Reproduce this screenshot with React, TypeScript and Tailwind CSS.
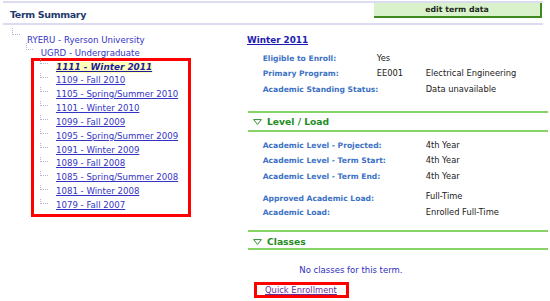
import React from "react";

const TERMS = [
  "1109 - Fall 2010",
  "1105 - Spring/Summer 2010",
  "1101 - Winter 2010",
  "1099 - Fall 2009",
  "1095 - Spring/Summer 2009",
  "1091 - Winter 2009",
  "1089 - Fall 2008",
  "1085 - Spring/Summer 2008",
  "1081 - Winter 2008",
  "1079 - Fall 2007",
];

const label = "font-bold text-[7.6px] text-[#3d72c4] whitespace-nowrap";
const value = "text-[8.3px] text-[#1a1a1a] whitespace-nowrap";

function GreenLine() {
  return <div className="ml-[1px] h-[2px] w-[300px] bg-[#86d466]" />;
}

function Tri() {
  return (
    <svg width="9" height="6" viewBox="0 0 9 6" className="ml-[5.7px] shrink-0">
      <polygon points="0.6,0.6 8.4,0.6 4.5,5.4" fill="#ffffff" stroke="#2e8b2e" strokeWidth="1" />
    </svg>
  );
}

function Connector({ className }: { className: string }) {
  return <div className={"shrink-0 border-l border-b border-dotted border-[#b3b7d3] " + className} />;
}

export default function App() {
  return (
    <div className="relative w-[550px] h-[301px] overflow-hidden bg-white font-['DejaVu_Sans',sans-serif]">
      {/* header */}
      <div className="mt-[1px] mx-[3px] w-[540px] border-t-2 border-b-2 border-[#dcdcf0] h-[24px] flex items-start">
        <div className="pl-[7px] pt-[7px] text-[9.5px] leading-[10px] font-bold tracking-[-0.35px] text-[#1f3a6e]">
          Term Summary
        </div>
        <div className="ml-auto mr-[1px] w-[168px] h-[15px] bg-[#d9f2cc] border-r-2 border-b-2 border-[#3f8a1f] flex items-center justify-center text-[7.8px] font-bold text-[#1d2a1d]">
          edit term data
        </div>
      </div>

      <div className="flex">
        {/* left tree */}
        <div className="w-[247px] shrink-0 flex flex-col text-[8.6px] text-[#3434c4]">
          <div className="mt-[8.5px] h-[13px] leading-[13px] flex items-start">
            <Connector className="ml-[12px] mt-[-5.5px] h-[7px] w-[8px]" />
            <span className="ml-[7px] whitespace-nowrap">RYERU - Ryerson University</span>
          </div>
          <div className="h-[13px] leading-[13px] flex items-start">
            <Connector className="ml-[26px] mt-[-3.5px] h-[7px] w-[7px]" />
            <span className="ml-[7.7px] whitespace-nowrap">UGRD - Undergraduate</span>
          </div>
          <div className="mt-[-1.5px] ml-[31px] w-[160px] h-[159px] border-[3px] border-[#ff0000]">
            <div className="mt-[-1px] flex flex-col">
              <div className="h-[13.93px] leading-[13.93px] flex items-start">
                <Connector className="ml-[6px] mt-[-0.6px] h-[5px] w-[8.3px]" />
                <span className="ml-[7.7px] whitespace-nowrap font-bold italic text-[8.9px] text-[#1d1d9e] underline bg-[#ffffb8] leading-[11px] mt-[1.5px]">
                  1111 - Winter 2011
                </span>
              </div>
              {TERMS.map((t) => (
                <div key={t} className="h-[13.93px] leading-[13.93px] flex items-start">
                  <Connector className="ml-[6px] mt-[-0.6px] h-[5px] w-[8.3px]" />
                  <span className="ml-[7.7px] whitespace-nowrap underline">{t}</span>
                </div>
              ))}
            </div>
          </div>
        </div>

        {/* right panel */}
        <div className="flex-1 flex flex-col">
          <div className="mt-[7px] h-[16px] leading-[16px] text-[8.8px] font-bold text-[#1c1cb0] underline whitespace-nowrap">
            Winter 2011
          </div>
          <div className="mt-[2.8px] h-[15px] leading-[15px] flex pl-[15.7px]">
            <div className={label + " w-[114px]"}>Eligible to Enroll:</div>
            <div className={value}>Yes</div>
          </div>
          <div className="h-[15px] leading-[15px] flex pl-[15.7px]">
            <div className={label + " w-[114px]"}>Primary Program:</div>
            <div className={value + " w-[49px]"}>EE001</div>
            <div className={value}>Electrical Engineering</div>
          </div>
          <div className="mt-[1px] h-[15px] leading-[15px] flex pl-[15.7px]">
            <div className={label + " w-[163px]"}>Academic Standing Status:</div>
            <div className={value}>Data unavailable</div>
          </div>

          <div className="mt-[13.9px]">
            <GreenLine />
          </div>
          <div className="h-[17px] pt-[3.6px] flex items-start">
            <div className="h-[12px] flex items-center">
              <Tri />
            </div>
            <div className="ml-[5.3px] leading-[12px] text-[9.2px] font-bold text-[#238b23] whitespace-nowrap">
              Level / Load
            </div>
          </div>
          <GreenLine />

          <div className="mt-[6.5px] h-[15px] leading-[15px] flex pl-[15.7px]">
            <div className={label + " w-[163px]"}>Academic Level - Projected:</div>
            <div className={value}>4th Year</div>
          </div>
          <div className="h-[15px] leading-[15px] flex pl-[15.7px]">
            <div className={label + " w-[163px]"}>Academic Level - Term Start:</div>
            <div className={value}>4th Year</div>
          </div>
          <div className="mt-[1px] h-[15px] leading-[15px] flex pl-[15.7px]">
            <div className={label + " w-[163px]"}>Academic Level - Term End:</div>
            <div className={value}>4th Year</div>
          </div>
          <div className="mt-[5.8px] h-[15px] leading-[15px] flex items-start pl-[15.7px]">
            <div className={label + " w-[163px] mt-[0.8px]"}>Approved Academic Load:</div>
            <div className={value + " mt-[-0.8px]"}>Full-Time</div>
          </div>
          <div className="mt-[0.5px] h-[15px] leading-[15px] flex pl-[15.7px]">
            <div className={label + " w-[163px]"}>Academic Load:</div>
            <div className={value}>Enrolled Full-Time</div>
          </div>

          <div className="mt-[9.2px]">
            <GreenLine />
          </div>
          <div className="h-[16.6px] pt-[4px] flex items-start">
            <div className="h-[12px] flex items-center">
              <Tri />
            </div>
            <div className="ml-[5.3px] leading-[12px] text-[9.2px] font-bold text-[#238b23] whitespace-nowrap">
              Classes
            </div>
          </div>
          <GreenLine />

          <div className="mt-[13.7px] pl-[52.3px] leading-[12px] text-[8.5px] text-[#3030c0] whitespace-nowrap">
            No classes for this term.
          </div>
          <div className="mt-[6px] ml-[7px] w-[95px] h-[16px] border-[3px] border-[#ff0000] pl-[8px] flex items-center">
            <span className="text-[8.4px] leading-[10px] text-[#6a2d9a] underline whitespace-nowrap">
              Quick Enrollment
            </span>
          </div>
        </div>
      </div>
    </div>
  );
}
